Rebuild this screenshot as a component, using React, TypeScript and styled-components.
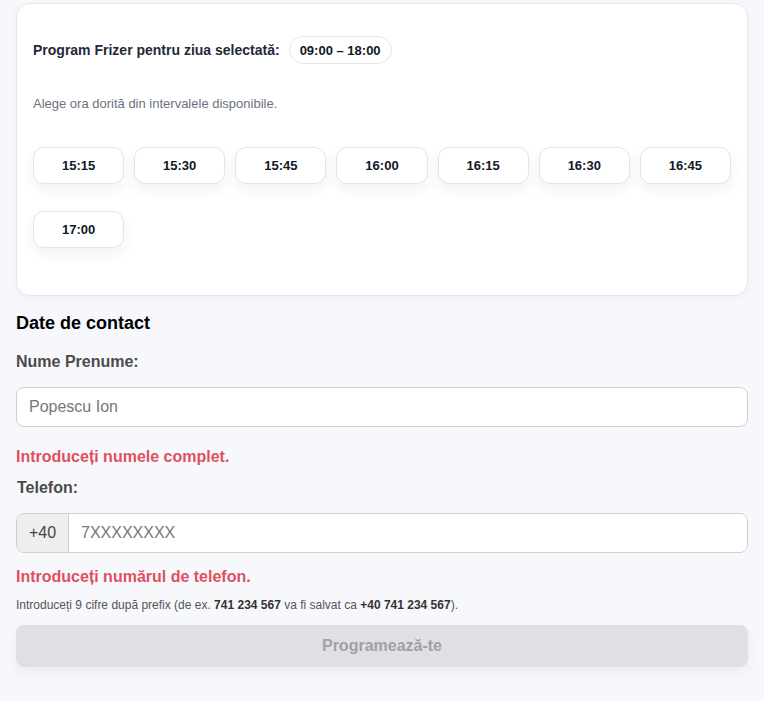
import { createGlobalStyle, styled } from 'styled-components';

const slots = ['15:15', '15:30', '15:45', '16:00', '16:15', '16:30', '16:45', '17:00'];

const GlobalStyle = createGlobalStyle`
  html, body {
    margin: 0;
    padding: 0;
    background: #f7f8fc;
    font-family: 'Liberation Sans', Arial, sans-serif;
  }
  * {
    box-sizing: border-box;
  }
`;

export default function App() {
  return (
    <>
      <GlobalStyle />
      <Page>
        <Card>
          <ScheduleRow>
            <ScheduleLabel>Program Frizer pentru ziua selectată:</ScheduleLabel>
            <HoursPill>09:00 – 18:00</HoursPill>
          </ScheduleRow>
          <Hint>Alege ora dorită din intervalele disponibile.</Hint>
          <SlotGrid>
            {slots.map((s) => (
              <Slot key={s} type="button">
                {s}
              </Slot>
            ))}
          </SlotGrid>
        </Card>

        <SectionTitle>Date de contact</SectionTitle>

        <Label>Nume Prenume:</Label>
        <TextInput placeholder="Popescu Ion" />
        <ErrorText>Introduceți numele complet.</ErrorText>

        <Label $indent $gap={13}>
          Telefon:
        </Label>
        <PhoneGroup>
          <Prefix>+40</Prefix>
          <PhoneInput placeholder="7XXXXXXXX" />
        </PhoneGroup>
        <ErrorText $gap={15}>Introduceți numărul de telefon.</ErrorText>
        <Help>
          Introduceți 9 cifre după prefix (de ex. <b>741 234 567</b> va fi salvat ca{' '}
          <b>+40 741 234 567</b>).
        </Help>

        <SubmitButton type="button" disabled>
          Programează-te
        </SubmitButton>
      </Page>
    </>
  );
}

const Page = styled.div`
  padding: 3px 16px 34px;
  display: flex;
  flex-direction: column;
`;

const Card = styled.div`
  background: #fff;
  border: 1px solid #e6e7eb;
  border-radius: 14px;
  padding: 32px 16px 47px;
  box-shadow: 0 2px 10px rgba(20, 30, 60, 0.04);
`;

const ScheduleRow = styled.div`
  display: flex;
  align-items: center;
  gap: 9px;
`;

const ScheduleLabel = styled.span`
  font-size: 14px;
  font-weight: 700;
  color: #1f2937;
`;

const HoursPill = styled.span`
  display: inline-flex;
  align-items: center;
  height: 28px;
  padding: 0 10px;
  border: 1px solid #e5e7eb;
  border-radius: 14px;
  font-size: 13px;
  font-weight: 700;
  color: #111827;
`;

const Hint = styled.p`
  margin: 32px 0 36px;
  font-size: 13px;
  color: #6b7280;
`;

const SlotGrid = styled.div`
  display: grid;
  grid-template-columns: repeat(7, 1fr);
  column-gap: 10px;
  row-gap: 27px;
`;

const Slot = styled.button`
  height: 37px;
  background: #fff;
  border: 1px solid #e3e4e8;
  border-radius: 11px;
  font-family: inherit;
  font-size: 13px;
  font-weight: 700;
  color: #111827;
  box-shadow: 0 6px 14px rgba(20, 30, 60, 0.06);
  cursor: pointer;
`;

const SectionTitle = styled.h3`
  margin: 17px 0 0;
  font-size: 18px;
  font-weight: 700;
  color: #000;
`;

const Label = styled.label<{ $indent?: boolean; $gap?: number }>`
  display: block;
  margin: ${({ $gap }) => $gap ?? 19}px 0 0;
  padding-left: ${({ $indent }) => ($indent ? '1px' : '0')};
  font-size: 16px;
  font-weight: 700;
  color: #4b4b4b;
`;

const TextInput = styled.input`
  margin-top: 16px;
  width: 100%;
  height: 40px;
  padding: 0 12px;
  border: 1px solid #cfcfd3;
  border-radius: 8px;
  background: #fff;
  font-family: inherit;
  font-size: 16px;
  &::placeholder {
    color: #777;
  }
`;

const ErrorText = styled.div<{ $gap?: number }>`
  margin-top: ${({ $gap }) => $gap ?? 21}px;
  font-size: 16px;
  font-weight: 700;
  color: #e0505f;
`;

const PhoneGroup = styled.div`
  margin-top: 16px;
  display: flex;
  height: 40px;
  border: 1px solid #cfcfd3;
  border-radius: 8px;
  overflow: hidden;
  background: #fff;
`;

const Prefix = styled.span`
  display: flex;
  align-items: center;
  justify-content: center;
  width: 52px;
  background: #eee;
  border-right: 1px solid #cfcfd3;
  font-size: 16px;
  color: #444;
`;

const PhoneInput = styled.input`
  flex: 1;
  border: none;
  outline: none;
  padding: 0 12px;
  font-family: inherit;
  font-size: 16px;
  &::placeholder {
    color: #777;
  }
`;

const Help = styled.div`
  margin-top: 12px;
  font-size: 12px;
  color: #555;
  b {
    color: #333;
  }
`;

const SubmitButton = styled.button`
  margin-top: 13px;
  height: 42px;
  width: 100%;
  border: none;
  border-radius: 8px;
  background: #dfe0e3;
  font-family: inherit;
  font-size: 16px;
  font-weight: 700;
  color: #a1a1a5;
  box-shadow: 0 6px 14px rgba(20, 30, 60, 0.05);
`;
